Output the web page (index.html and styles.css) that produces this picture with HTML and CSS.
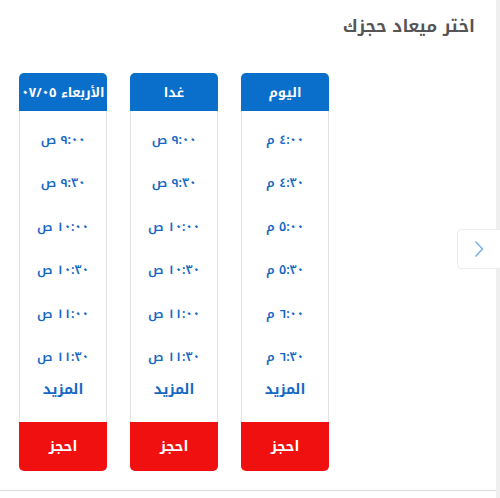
FILE: index.html
```html
<!DOCTYPE html>
<html lang="ar" dir="rtl">
<head>
<meta charset="utf-8">
<link rel="stylesheet" href="styles.css">
</head>
<body>
<div class="page">
  <div class="main">
    <h2 class="title">اختر ميعاد حجزك</h2>
    <div class="cards">
      <div class="card">
        <div class="card-head">اليوم</div>
        <div class="card-body">
          <div class="slot">٤:٠٠ م</div>
          <div class="slot">٤:٣٠ م</div>
          <div class="slot">٥:٠٠ م</div>
          <div class="slot">٥:٣٠ م</div>
          <div class="slot">٦:٠٠ م</div>
          <div class="slot">٦:٣٠ م</div>
          <div class="more">المزيد</div>
        </div>
        <div class="book">احجز</div>
      </div>
      <div class="card">
        <div class="card-head">غدا</div>
        <div class="card-body">
          <div class="slot">٩:٠٠ ص</div>
          <div class="slot">٩:٣٠ ص</div>
          <div class="slot">١٠:٠٠ ص</div>
          <div class="slot">١٠:٣٠ ص</div>
          <div class="slot">١١:٠٠ ص</div>
          <div class="slot">١١:٣٠ ص</div>
          <div class="more">المزيد</div>
        </div>
        <div class="book">احجز</div>
      </div>
      <div class="card">
        <div class="card-head">الأربعاء ٠٧/٠٥</div>
        <div class="card-body">
          <div class="slot">٩:٠٠ ص</div>
          <div class="slot">٩:٣٠ ص</div>
          <div class="slot">١٠:٠٠ ص</div>
          <div class="slot">١٠:٣٠ ص</div>
          <div class="slot">١١:٠٠ ص</div>
          <div class="slot">١١:٣٠ ص</div>
          <div class="more">المزيد</div>
        </div>
        <div class="book">احجز</div>
      </div>
    </div>
    <div class="next">
      <svg width="10" height="18" viewBox="0 0 10 18"><path d="M1.5 1.5 L8.5 9 L1.5 16.5" fill="none" stroke="#7db2ea" stroke-width="1.6"/></svg>
    </div>
  </div>
  <div class="strip"></div>
</div>
</body>
</html>
```
FILE: styles.css
```css
html, body {
  margin: 0;
  padding: 0;
  background: #fff;
}
body {
  font-family: "Noto Kufi Arabic", "Noto Sans Arabic", "DejaVu Sans", sans-serif;
}
.page {
  display: flex;
  height: 498px;
  direction: ltr;
}
.main {
  width: 496px;
  height: 491px;
  border-bottom: 1px solid #dcdcdc;
  position: relative;
  direction: rtl;
  box-sizing: border-box;
}
.strip {
  flex: 1;
  background: #efefef;
}
.title {
  margin: 0;
  padding: 14px 21px 0 0;
  font-size: 17px;
  line-height: 24px;
  font-weight: bold;
  color: #555;
}
.cards {
  display: flex;
  gap: 23px;
  margin-top: 35px;
  padding-right: 167px;
}
.card {
  width: 88px;
  display: flex;
  flex-direction: column;
}
.card-head {
  height: 38px;
  background: #0a6fca;
  color: #fff;
  border-radius: 5px 5px 0 0;
  font-size: 13px;
  font-weight: bold;
  display: flex;
  align-items: center;
  justify-content: center;
  white-space: nowrap;
}
.card-body {
  border-left: 1px solid #e2e2e2;
  border-right: 1px solid #e2e2e2;
  padding: 8px 0 22px;
  text-align: center;
  color: #1468c4;
}
.slot {
  height: 43.4px;
  line-height: 43.4px;
  font-size: 12.5px;
  font-weight: 600;
}
.more {
  height: 21px;
  line-height: 21px;
  font-size: 14px;
  font-weight: bold;
}
.book {
  height: 49px;
  background: #f01010;
  color: #fff;
  border-radius: 0 0 5px 5px;
  font-size: 14px;
  font-weight: bold;
  display: flex;
  align-items: center;
  justify-content: center;
}
.next {
  position: absolute;
  left: 457px;
  top: 229px;
  width: 46px;
  height: 40px;
  border: 1px solid #ececec;
  border-radius: 4px;
  box-sizing: border-box;
  direction: ltr;
  display: flex;
  align-items: center;
  justify-content: flex-start;
  padding-left: 16px;
  background: #fff;
}
```
